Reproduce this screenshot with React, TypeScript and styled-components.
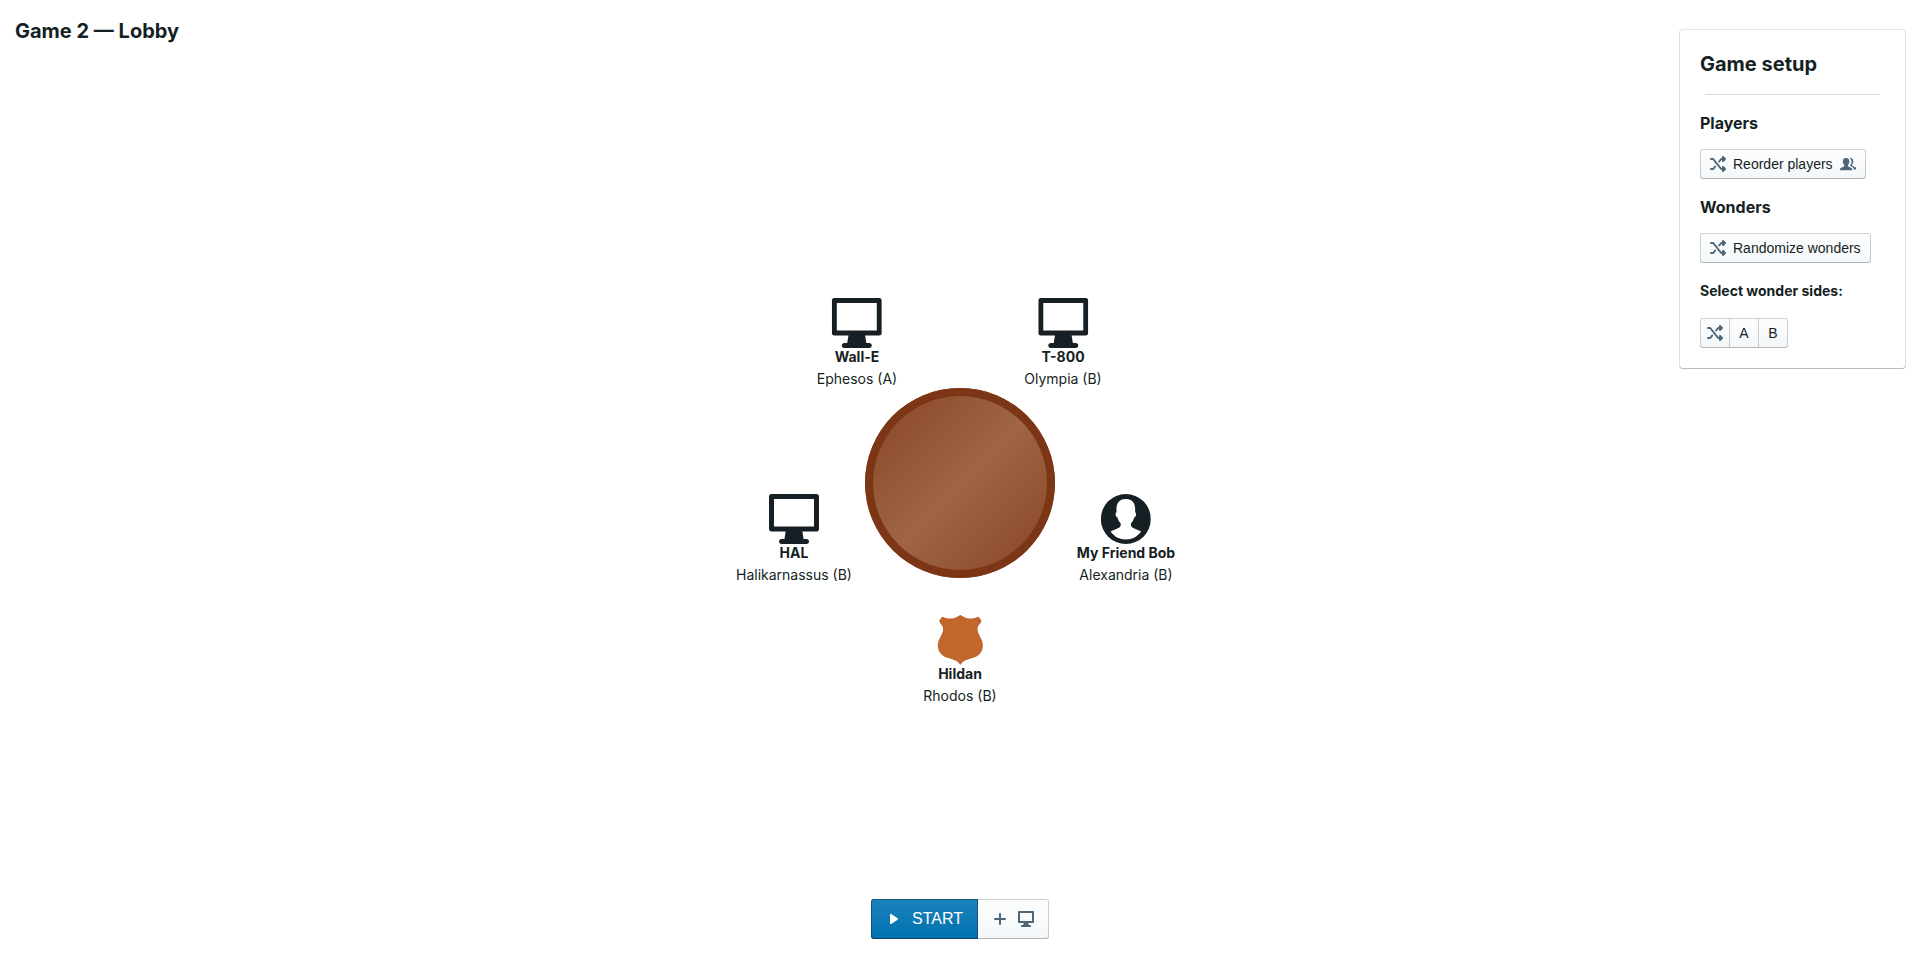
import React from "react";
import styled, { createGlobalStyle, css } from "styled-components";

const GlobalStyle = createGlobalStyle`
  *, *::before, *::after { box-sizing: border-box; }
  body {
    margin: 0;
    background: #fff;
    color: #161f23;
    font: 14px/18px Inter, "Liberation Sans", sans-serif;
  }
`;

/* ---------- icons ---------- */

type IconName = "random" | "people" | "desktop" | "desktopLarge" | "user" | "badge" | "play" | "plus";

const ICONS: Record<IconName, { box: number; art: React.ReactNode }> = {
  random: {
    box: 16,
    art: (
      <>
        <path
          d="M1 3h2.2l8 10H13M1 13h2.2l2-2.5M9.2 5.5l2-2.5H13"
          fill="none"
          stroke="currentColor"
          strokeWidth="2"
          strokeLinecap="round"
          strokeLinejoin="round"
        />
        <path d="M12 1c0-.9 1-1.300 1.700-.7l2 2c.4.400.4 1 0 1.400l-2 2C13 6.300 12 5.900 12 5zM12 11c0-.9 1-1.300 1.700-.7l2 2c.4.400.4 1 0 1.400l-2 2c-.7.600-1.700.2-1.700-.7z" />
      </>
    ),
  },
  people: {
    box: 16,
    art: (
      <>
        <path d="M0 14.200c0-1.600.2-2 .9-2.300.8-.4 2.300-.7 3-1.300.4-.4.500-.9.400-1.400-.5-.5-.8-1.100-1-1.900-.3-.1-.6-.5-.6-1 0-.4.100-.6.300-.7-.1-2.200.6-3.600 3.100-3.600s3.200 1.400 3.100 3.600c.2.100.3.300.3.700 0 .5-.3.900-.6 1-.2.800-.5 1.400-1 1.900-.1.500 0 1 .4 1.400.7.600 2.200.9 3 1.300.7.300.9.700.9 2.300z" />
        <path d="M9.300 2.100c2.800-.6 4 .9 3.800 3.200.2.100.3.300.3.700 0 .5-.3.900-.5 1-.2.700-.5 1.200-.8 1.600-.1.500 0 .9.300 1.200.6.500 1.900.8 2.700 1.200.8.300 1.100.9 1.100 2.600h-2.500c-.1-1.300-.5-2-1.300-2.500-.7-.4-1.500-.6-2.100-1-.3-.3-.2-.7 0-1 .4-.5.700-1 .8-1.500.4-.4.600-.8.600-1.400 0-.4-.1-.7-.3-.9 0-1.400-.4-2.400-2.100-3.200z" />
      </>
    ),
  },
  desktop: {
    box: 16,
    art: (
      <path d="M15 0H1C.45 0 0 .45 0 1v10c0 .55.45 1 1 1h4.750l-.5 2H4c-.55 0-1 .45-1 1s.45 1 1 1h8c.55 0 1-.45 1-1s-.45-1-1-1h-1.250l-.5-2H15c.55 0 1-.45 1-1V1c0-.55-.45-1-1-1zm-1 10H2V2h12v8z" />
    ),
  },
  desktopLarge: {
    box: 20,
    art: (
      <path d="M19 0H1C.45 0 0 .45 0 1v13c0 .55.45 1 1 1h5.670l-.5 3H5c-.55 0-1 .45-1 1s.45 1 1 1h10c.55 0 1-.45 1-1s-.45-1-1-1h-1.170l-.5-3H19c.55 0 1-.45 1-1V1c0-.55-.45-1-1-1zm-1 13H2V2h16v11z" />
    ),
  },
  user: {
    box: 20,
    art: (
      <>
        <circle cx="10" cy="10" r="10" />
        <path
          fill="#fff"
          d="M10 18.200c-2.600 0-4.700-1.200-6.100-3.200 1-.6 2.600-1 3.500-1.600.5-.4.700-1 .5-1.700-.6-.6-1-1.300-1.200-2.300-.4-.1-.8-.6-.8-1.200 0-.5.100-.8.400-.9C6 4.300 6.900 2 10 2s4 2.300 3.700 5.300c.3.100.4.400.4.900 0 .6-.4 1.100-.8 1.200-.2 1-.6 1.700-1.200 2.300-.2.700 0 1.300.5 1.700.9.600 2.500 1 3.500 1.600-1.400 2-3.500 3.200-6.100 3.200z"
        />
      </>
    ),
  },
  badge: {
    box: 20,
    art: (
      <path d="M16.900 5.200c.1-1.100 1.500-1.900 1.500-2.900 0-.4-1-1.500-1.400-1.600-1.200.8-3.800 1.100-5.500.1C11 .5 10.500.3 10 0c-.5.300-1 .5-1.500.8C6.800 1.800 4.200 1.500 3 .7c-.4.100-1.400 1.200-1.400 1.600 0 1 1.400 1.800 1.500 2.900C3.300 7.900 1 9.300 1 12c0 2.500 1.200 4.200 3.500 5 1.900.7 4.300.9 5.500 3 1.200-2.100 3.600-2.300 5.500-3 2.300-.8 3.500-2.500 3.500-5 0-2.700-2.300-4.100-2.100-6.800z" />
    ),
  },
  play: {
    box: 16,
    art: <path d="M4 4c0-.6.400-1 1-1 .2 0 .4.100.6.200l6 4c.5.400.5 1.200 0 1.600l-6 4c-.7.500-1.600 0-1.600-.8z" />,
  },
  plus: {
    box: 16,
    art: <path d="M13 7H9V3c0-.55-.45-1-1-1s-1 .45-1 1v4H3c-.55 0-1 .45-1 1s.45 1 1 1h4v4c0 .55.45 1 1 1s1-.45 1-1V9h4c.55 0 1-.45 1-1s-.45-1-1-1z" />,
  },
};

const IconSvg = styled.svg`
  display: block;
  flex: none;
  fill: currentColor;
`;

function Icon({ name, size = 16 }: { name: IconName; size?: number }) {
  const { box, art } = ICONS[name];
  return (
    <IconSvg width={size} height={size} viewBox={`0 0 ${box} ${box}`} aria-hidden="true">
      {art}
    </IconSvg>
  );
}

/* ---------- buttons ---------- */

const ButtonGroup = styled.div`
  display: inline-flex;

  & > button:not(:first-child) {
    border-top-left-radius: 0;
    border-bottom-left-radius: 0;
  }
  & > button:not(:last-child) {
    margin-right: -1px;
    border-top-right-radius: 0;
    border-bottom-right-radius: 0;
  }
`;

const Button = styled.button<{ $large?: boolean; $primary?: boolean; $square?: boolean }>`
  display: inline-flex;
  align-items: center;
  justify-content: center;
  gap: 7px;
  min-width: 30px;
  min-height: 30px;
  padding: 5px ${(p) => (p.$square ? 7 : 10)}px;
  border: 0;
  border-radius: 3px;
  background: linear-gradient(180deg, #fdfefe, #f3f7f9);
  box-shadow: inset 0 0 0 1px rgba(16, 22, 26, 0.2), inset 0 -1px 0 rgba(16, 22, 26, 0.1);
  color: #161f23;
  font: 14px/18px "Liberation Sans", Arial, sans-serif;
  white-space: nowrap;
  cursor: pointer;

  svg {
    color: #4f6677;
  }

  ${(p) =>
    p.$large &&
    css`
      gap: 10px;
      min-height: 40px;
      padding: 5px 15px;
      font-size: 16px;
    `}

  ${(p) =>
    p.$primary &&
    css`
      z-index: 1;
      background: linear-gradient(180deg, #1c82bb, #0071b0);
      box-shadow: inset 0 0 0 1px rgba(16, 22, 26, 0.4), inset 0 -1px 0 rgba(16, 22, 26, 0.2);
      color: #fff;

      svg {
        color: #fff;
      }
    `}
`;

/* ---------- page ---------- */

const Lobby = styled.main`
  display: grid;
  grid-template-columns: minmax(0, 1fr);
  grid-template-rows: minmax(100vh, auto);

  & > * {
    grid-area: 1 / 1;
  }
`;

const Title = styled.h1`
  align-self: start;
  justify-self: start;
  margin: 20px 15px;
  font-size: 20px;
  line-height: 22px;
`;

const Setup = styled.aside`
  align-self: start;
  justify-self: end;
  width: 225px;
  margin: 30px 11px;
  padding: 20px;
  border-radius: 3px;
  background: #fff;
  box-shadow: 0 0 0 1px rgba(16, 22, 26, 0.12), 0 1px 1px rgba(16, 22, 26, 0.2);
`;

const SetupTitle = styled.h2`
  margin: 3px 0 19px;
  font-size: 20px;
  line-height: 22px;
`;

const Divider = styled.hr`
  margin: 0 5px 18px;
  border: 0;
  border-top: 1px solid #d9dbdc;
`;

const SectionTitle = styled.h3`
  margin: 18px 0 16px;
  font-size: 16px;
  line-height: 20px;
`;

const FieldTitle = styled.h4`
  margin: 19px 0 18px;
  font-size: 14px;
  line-height: 18px;
`;

const Stage = styled.div`
  display: grid;
  place-items: center;
  padding: 0 0 4px 4px;
`;

const Table = styled.div`
  position: relative;
  width: 190px;
  height: 190px;
  border-radius: 50%;
  background: linear-gradient(135deg, #874323, #9f6546 50%, #874323);
  box-shadow: inset 0 0 0 8px #7c3515;
`;

const Seat = styled.div`
  position: absolute;
  display: flex;
  flex-direction: column;
  align-items: center;
  margin-top: -43px;
  transform: translateX(-50%);
  white-space: nowrap;
`;

const SeatIcon = styled.span<{ $host?: boolean }>`
  color: ${(p) => (p.$host ? "#c1662c" : "#161f23")};
`;

const PlayerName = styled.strong`
  font-weight: 700;
`;

const WonderName = styled.span`
  margin-top: 4px;
`;

const Actions = styled.div`
  align-self: end;
  justify-self: center;
  padding: 0 0 30px 4px;
`;

const SEAT_RADIUS = 175;

const PLAYERS: { name: string; wonder: string; icon: IconName; host?: boolean }[] = [
  { name: "Hildan", wonder: "Rhodos (B)", icon: "badge", host: true },
  { name: "My Friend Bob", wonder: "Alexandria (B)", icon: "user" },
  { name: "T-800", wonder: "Olympia (B)", icon: "desktopLarge" },
  { name: "Wall-E", wonder: "Ephesos (A)", icon: "desktopLarge" },
  { name: "HAL", wonder: "Halikarnassus (B)", icon: "desktopLarge" },
];

function seatPosition(index: number) {
  const angle = (2 * Math.PI * index) / PLAYERS.length;
  const x = Math.round(SEAT_RADIUS * Math.sin(angle));
  const y = Math.round(SEAT_RADIUS * Math.cos(angle));
  return { left: `calc(50% + ${x}px)`, top: `calc(50% + ${y}px)` };
}

export default function App() {
  return (
    <>
      <GlobalStyle />
      <Lobby>
        <Stage>
          <Table>
            {PLAYERS.map((p, i) => (
              <Seat key={p.name} style={seatPosition(i)}>
                <SeatIcon $host={p.host}>
                  <Icon name={p.icon} size={50} />
                </SeatIcon>
                <PlayerName>{p.name}</PlayerName>
                <WonderName>{p.wonder}</WonderName>
              </Seat>
            ))}
          </Table>
        </Stage>

        <Title>Game 2 — Lobby</Title>

        <Actions>
          <ButtonGroup>
            <Button type="button" $large $primary>
              <Icon name="play" />
              START
            </Button>
            <Button type="button" $large aria-label="Add a bot">
              <Icon name="plus" />
              <Icon name="desktop" />
            </Button>
          </ButtonGroup>
        </Actions>

        <Setup>
          <SetupTitle>Game setup</SetupTitle>
          <Divider />
          <SectionTitle>Players</SectionTitle>
          <Button type="button">
            <Icon name="random" />
            Reorder players
            <Icon name="people" />
          </Button>
          <SectionTitle>Wonders</SectionTitle>
          <Button type="button">
            <Icon name="random" />
            Randomize wonders
          </Button>
          <FieldTitle id="wonder-sides">Select wonder sides:</FieldTitle>
          <ButtonGroup role="group" aria-labelledby="wonder-sides">
            <Button type="button" $square aria-label="Random sides">
              <Icon name="random" />
            </Button>
            <Button type="button" $square>A</Button>
            <Button type="button" $square>B</Button>
          </ButtonGroup>
        </Setup>
      </Lobby>
    </>
  );
}
